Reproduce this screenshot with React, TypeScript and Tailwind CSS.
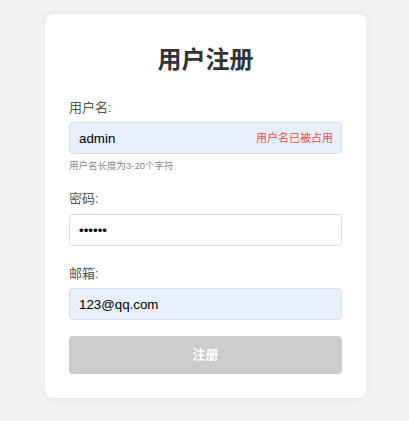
import React from "react";

export default function App() {
  const font = { fontFamily: '"Liberation Sans", "Noto Sans CJK SC", sans-serif' };
  return (
    <div
      className="min-h-screen w-full bg-[#f4f4f4] flex justify-center pt-[14px] pl-[2px]"
      style={font}
    >
      <div className="w-[321px] h-[384px] bg-white rounded-[8px] shadow-[0_0_10px_rgba(0,0,0,0.08)] px-[24px] pt-[24px] pb-[24px]">
        <h2 className="text-center text-[24px] font-bold text-[#333] leading-[44px] mb-[16px]">
          用户注册
        </h2>

        <div className="mb-[17px]">
          <label className="block text-[13px] text-[#555] leading-[20px] mb-[4px]">用户名:</label>
          <div className="relative">
            <input
              readOnly
              value="admin"
              className="block w-full h-[32px] px-[9px] text-[13.333px] text-black bg-[#e8f0fe] border border-[#ddd] rounded-[4px] outline-none"
              style={font}
            />
            <span
              className="absolute right-[9px] top-0 h-[32px] flex items-center text-[11px] text-[#e74c3c]"
              style={font}
            >
              用户名已被占用
            </span>
          </div>
          <div className="mt-[6px] text-[9.5px] leading-[12px] text-[#888]">用户名长度为3-20个字符</div>
        </div>

        <div className="mb-[18px]">
          <label className="block text-[13px] text-[#555] leading-[20px] mb-[5px]">密码:</label>
          <input
            readOnly
            type="password"
            value="123456"
            className="block w-full h-[32px] px-[9px] text-[13.333px] text-black bg-white border border-[#ddd] rounded-[4px] outline-none"
            style={font}
          />
        </div>

        <div className="mb-[16px]">
          <label className="block text-[13px] text-[#555] leading-[20px] mb-[4px]">邮箱:</label>
          <input
            readOnly
            value="123@qq.com"
            className="block w-full h-[32px] px-[9px] text-[13.333px] text-black bg-[#e8f0fe] border border-[#ddd] rounded-[4px] outline-none"
            style={font}
          />
        </div>

        <button
          disabled
          className="block w-full h-[38px] bg-[#cccccc] text-white text-[13px] font-bold rounded-[4px]"
          style={font}
        >
          注册
        </button>
      </div>
    </div>
  );
}
